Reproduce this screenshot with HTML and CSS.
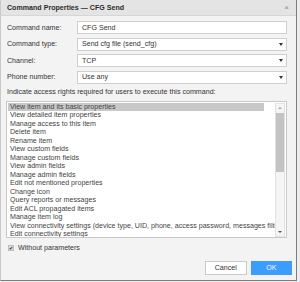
FILE: index.html
```html
<!doctype html>
<html lang="en">

<head>
  <meta charset="UTF-8">
  <title>Command Properties</title>
  <link rel="stylesheet" href="styles.css">
</head>

<body>

  <div class="dialog">
    <div class="titlebar">
      <span class="title">Command Properties — CFG Send</span>
      <span class="close">×</span>
    </div>

    <div class="content">
      <div class="fields">
        <span class="label">Command name:</span>
        <div class="field">CFG Send</div>
        <span class="label">Command type:</span>
        <div class="field select">Send cfg file (send_cfg)<i class="caret"></i></div>
        <span class="label">Channel:</span>
        <div class="field select">TCP<i class="caret"></i></div>
        <span class="label">Phone number:</span>
        <div class="field select">Use any<i class="caret"></i></div>
      </div>

      <p class="hint">Indicate access rights required for users to execute this command:</p>

      <div class="listbox">
        <ul class="items">
          <li class="selected">View item and its basic properties</li>
          <li>View detailed item properties</li>
          <li>Manage access to this item</li>
          <li>Delete item</li>
          <li>Rename item</li>
          <li>View custom fields</li>
          <li>Manage custom fields</li>
          <li>View admin fields</li>
          <li>Manage admin fields</li>
          <li>Edit not mentioned properties</li>
          <li>Change icon</li>
          <li>Query reports or messages</li>
          <li>Edit ACL propagated items</li>
          <li>Manage item log</li>
          <li>View connectivity settings (device type, UID, phone, access password, messages filter)</li>
          <li>Edit connectivity settings</li>
        </ul>
        <div class="scrollbar">
          <i class="arrow up"></i>
          <div class="thumb"></div>
          <i class="arrow down"></i>
        </div>
      </div>

      <div class="check">
        <span class="box">✔</span>
        <span>Without parameters</span>
      </div>

      <div class="buttons">
        <button class="btn">Cancel</button>
        <button class="btn ok">OK</button>
      </div>
    </div>
  </div>

</body>

</html>
```

FILE: styles.css
```css
* {
  margin: 0px;
  padding: 0px;
  box-sizing: border-box;
}

body {
  background: #ededed;
  font-family: "Liberation Sans", Arial, sans-serif;
  font-size: 7.1px;
  color: #333;
}

.dialog {
  width: 297px;
  height: 281px;
  background: #f3f3f3;
  border-left: 1px solid #c9c9c9;
  border-right: 1px solid #7d7d7d;
  border-bottom: 1px solid #7d7d7d;
}

.titlebar {
  height: 16px;
  background: #e4e4e4;
  border-bottom: 1px solid #d6d6d6;
  display: flex;
  align-items: center;
  justify-content: space-between;
  padding: 0 7px 0 6px;
}

.title {
  font-weight: bold;
  color: #2b2b2b;
}

.close {
  color: #8a8a8a;
  font-size: 8px;
}

.content {
  padding: 5px 9px 0 5px;
}

.fields {
  display: grid;
  grid-template-columns: 71px 210px;
  row-gap: 3.5px;
  align-items: center;
}

.label {
  padding-left: 1px;
}

.field {
  height: 13px;
  background: #fff;
  border: 1px solid #cfcfcf;
  padding-left: 4px;
  display: flex;
  align-items: center;
  justify-content: space-between;
  padding-right: 3px;
}

.caret {
  width: 0;
  height: 0;
  border-left: 2.5px solid transparent;
  border-right: 2.5px solid transparent;
  border-top: 3px solid #333;
}

.hint {
  margin: 4px 0 4px 1px;
  line-height: 9px;
}

.listbox {
  width: 281px;
  height: 137px;
  background: #fff;
  border: 1px solid #c9c9c9;
  display: flex;
  padding: 1px 1px 0 0;
}

.items {
  list-style: none;
  flex: 1;
  overflow: hidden;
  padding-left: 1px;
  color: #444;
}

.items li {
  width: 256px;
  height: 8.5px;
  line-height: 8.5px;
  padding-left: 2px;
  white-space: nowrap;
}

.items li.selected {
  background: #c8c8c8;
}

.scrollbar {
  width: 10px;
  height: 134px;
  background: #f5f5f5;
  border: 1px solid #e2e2e2;
  display: flex;
  flex-direction: column;
  align-items: center;
  padding-top: 3px;
}

.arrow {
  width: 0;
  height: 0;
  border-left: 2px solid transparent;
  border-right: 2px solid transparent;
}

.arrow.up {
  border-bottom: 2px solid #a6a6a6;
}

.arrow.down {
  margin-top: auto;
  margin-bottom: 3px;
  border-top: 2px solid #555;
}

.thumb {
  width: 8px;
  height: 59px;
  margin-top: 4px;
  background: #c3c3c3;
}

.check {
  display: flex;
  align-items: center;
  gap: 4px;
  margin: 6px 0 0 2px;
}

.box {
  width: 6px;
  height: 6px;
  background: #dcdcdc;
  border: 1px solid #bdbdbd;
  font-size: 5px;
  line-height: 4px;
  text-align: center;
  color: #222;
}

.buttons {
  display: flex;
  justify-content: flex-end;
  gap: 4px;
  margin: 9px -5px 0 0;
}

.btn {
  width: 41.5px;
  height: 14px;
  font-family: "Liberation Sans", Arial, sans-serif;
  font-size: 7.1px;
  color: #333;
  background: #fff;
  border: 1px solid #c9c9c9;
}

.btn.ok {
  background: #3d9cff;
  border-color: #3d9cff;
  color: #fff;
}
```
